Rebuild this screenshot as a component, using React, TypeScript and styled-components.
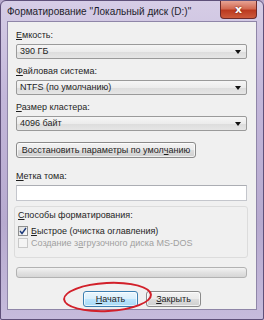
import React, { FC } from "react";
import styled, { createGlobalStyle } from "styled-components";

const Global = createGlobalStyle`
  html, body { margin: 0; padding: 0; background: #b8aacd; }
  body { font-family: "Liberation Sans", Arial, sans-serif; }
`;

const Window = styled.div`
  position: relative;
  width: 264px;
  height: 320px;
  box-sizing: border-box;
  border: 1px solid #5e5079;
  border-radius: 6px 6px 2px 2px;
  background: linear-gradient(180deg, #d6cde6 0%, #c3b7da 30%, #b7aacf 70%, #c6bbdc 100%);
  display: flex;
  flex-direction: column;
  overflow: hidden;
`;

const TitleBar = styled.div`
  height: 20px;
  display: flex;
  align-items: center;
  justify-content: space-between;
  padding-left: 6px;
  font-size: 10px;
  color: #1d1d2b;
`;

const CloseButton = styled.div`
  align-self: flex-start;
  width: 35px;
  height: 17px;
  margin-right: 6px;
  border: 1px solid #6c2a2a;
  border-top: none;
  border-radius: 0 0 4px 4px;
  background: linear-gradient(180deg, #e7a393 0%, #d36a52 45%, #bb3a20 55%, #cd5a3c 100%);
  display: flex;
  align-items: center;
  justify-content: center;
  color: #fff;
  font-size: 11px;
  font-weight: bold;
  font-family: "DejaVu Sans", sans-serif;
  text-shadow: 0 0 2px #5a1a10;
`;

const Client = styled.div`
  flex: 1;
  margin: 0 6px 9px 6px;
  border: 1px solid #8f86a8;
  background: #f0f0f0;
  display: flex;
  flex-direction: column;
  padding: 7px 9px 0 8px;
  font-size: 9px;
  color: #1e1e1e;
`;

const Field = styled.div<{ $gap?: number }>`
  display: flex;
  flex-direction: column;
  gap: 2px;
  margin-top: ${p => p.$gap ?? 0}px;
`;

const Label = styled.div`
  line-height: 13px;
  height: 13px;
  white-space: nowrap;
  u { text-decoration: underline; text-underline-offset: 1px; }
`;

const Combo = styled.div`
  height: 15px;
  box-sizing: border-box;
  border: 1px solid #9a9a9a;
  border-radius: 2px;
  background: linear-gradient(180deg, #f6f6f6 0%, #ececec 50%, #dcdcdc 51%, #e6e6e6 100%);
  display: flex;
  align-items: center;
  justify-content: space-between;
  padding: 0 5px 0 3px;
  line-height: 13px;
`;

const Arrow = styled.span`
  width: 0;
  height: 0;
  border-left: 3.5px solid transparent;
  border-right: 3.5px solid transparent;
  border-top: 4px solid #111;
`;

const Button = styled.div<{ $width: number; $focused?: boolean }>`
  width: ${p => p.$width}px;
  height: 16px;
  box-sizing: border-box;
  border: 1px solid ${p => (p.$focused ? "#3c7fb1" : "#8a8a8a")};
  border-radius: 3px;
  background: ${p =>
    p.$focused
      ? "linear-gradient(180deg, #eaf6fd 0%, #d9effc 50%, #bee6fd 51%, #a7d9f5 100%)"
      : "linear-gradient(180deg, #f2f2f2 0%, #ebebeb 50%, #dddddd 51%, #cfcfcf 100%)"};
  box-shadow: inset 0 0 0 1px rgba(255, 255, 255, 0.7);
  display: flex;
  align-items: center;
  justify-content: center;
  line-height: 13px;
  white-space: nowrap;
  u { text-decoration: underline; text-underline-offset: 1px; }
`;

const TextInput = styled.div`
  height: 16px;
  box-sizing: border-box;
  border: 1px solid #c4c6cc;
  border-top-color: #abadb3;
  background: #fff;
`;

const GroupBox = styled.div`
  margin-top: 5px;
  margin-left: -2px;
  margin-right: -1px;
  height: 52px;
  box-sizing: border-box;
  border: 1px solid #dcdcdc;
  border-radius: 3px;
  display: flex;
  flex-direction: column;
  padding: 2px 0 0 3px;
`;

const CheckRow = styled.div<{ $disabled?: boolean }>`
  display: flex;
  align-items: center;
  gap: 3px;
  height: 12px;
  line-height: 12px;
  margin-top: ${p => (p.$disabled ? 0 : 3)}px;
  color: ${p => (p.$disabled ? "#a0a0a0" : "#1e1e1e")};
  white-space: nowrap;
  u { text-decoration: underline; text-underline-offset: 1px; }
`;

const CheckBox = styled.span<{ $disabled?: boolean }>`
  width: 10px;
  height: 10px;
  flex: none;
  box-sizing: border-box;
  border: 1px solid ${p => (p.$disabled ? "#c8c8c8" : "#8e8f8f")};
  background: ${p => (p.$disabled ? "#f4f4f4" : "linear-gradient(135deg, #dcdcdc, #fbfbfb)")};
  display: flex;
  align-items: center;
  justify-content: center;
`;

const Progress = styled.div`
  margin-top: 9px;
  height: 11px;
  box-sizing: border-box;
  border: 1px solid #b2b2b2;
  border-radius: 3px;
  background: linear-gradient(180deg, #f3f3f3 0%, #e2e2e2 50%, #d6d6d6 100%);
`;

const ButtonRow = styled.div`
  margin-top: 13px;
  display: flex;
  justify-content: flex-start;
  gap: 8px;
  padding-left: 67px;
  position: relative;
`;

const Highlight = styled.div`
  position: absolute;
  left: 47px;
  top: -9px;
  width: 89px;
  height: 30px;
  box-sizing: border-box;
  border: 2px solid #d2202a;
  border-radius: 50%;
  transform: rotate(-3deg);
  pointer-events: none;
`;

const Tick: FC = () => (
  <svg width="8" height="8" viewBox="0 0 8 8">
    <path d="M1 4 L3 6.5 L7 1" fill="none" stroke="#1d3a7a" strokeWidth="1.4" />
  </svg>
);

const App: FC = () => (
  <>
    <Global />
    <Window>
      <TitleBar>
        <span>Форматирование "Локальный диск (D:)"</span>
        <CloseButton>x</CloseButton>
      </TitleBar>
      <Client>
        <Field>
          <Label><u>Е</u>мкость:</Label>
          <Combo>390 ГБ<Arrow /></Combo>
        </Field>
        <Field $gap={6}>
          <Label><u>Ф</u>айловая система:</Label>
          <Combo>NTFS (по умолчанию)<Arrow /></Combo>
        </Field>
        <Field $gap={6}>
          <Label><u>Р</u>азмер кластера:</Label>
          <Combo>4096 байт<Arrow /></Combo>
        </Field>
        <Field $gap={11}>
          <Button $width={180}>Восстановить параметры по умол<u>ч</u>анию</Button>
        </Field>
        <Field $gap={12}>
          <Label><u>М</u>етка тома:</Label>
          <TextInput />
        </Field>
        <GroupBox>
          <Label><u>С</u>пособы форматирования:</Label>
          <CheckRow>
            <CheckBox><Tick /></CheckBox>
            <span><u>Б</u>ыстрое (очистка оглавления)</span>
          </CheckRow>
          <CheckRow $disabled>
            <CheckBox $disabled />
            <span>Создание з<u>а</u>грузочного диска MS-DOS</span>
          </CheckRow>
        </GroupBox>
        <Progress />
        <ButtonRow>
          <Button $width={55} $focused><span><u>Н</u>ачать</span></Button>
          <Button $width={55}><span><u>З</u>акрыть</span></Button>
          <Highlight />
        </ButtonRow>
      </Client>
    </Window>
  </>
);

export default App;
